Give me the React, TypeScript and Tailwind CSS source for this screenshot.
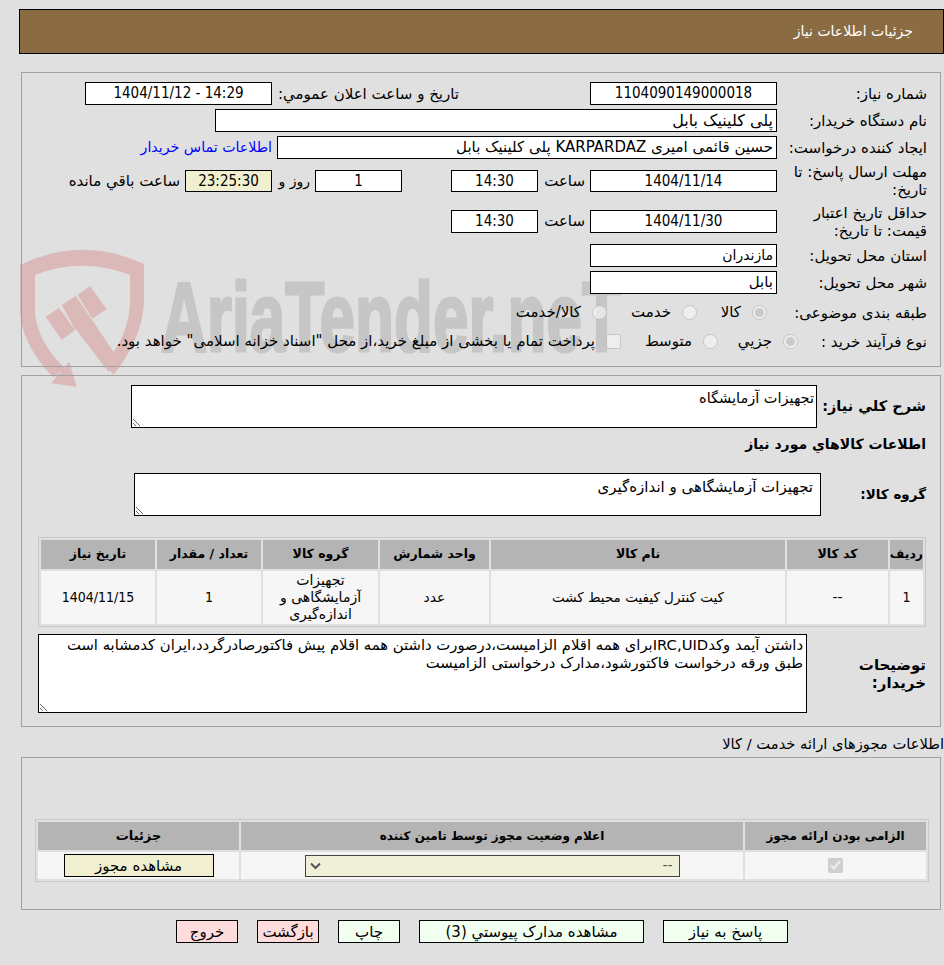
const latin = "font-['DejaVu_Sans_Condensed','Liberation_Sans',sans-serif] [font-stretch:condensed]";

const Label = ({ children, className = 'w-[150px]' }: { children: React.ReactNode; className?: string }) => (
  <div className={`shrink-0 pl-[6px] leading-[18px] ${className}`}>{children}</div>
);

const Box = ({ children, className = '', bg = 'bg-white' }: { children?: React.ReactNode; className?: string; bg?: string }) => (
  <div className={`flex h-full shrink-0 items-center border border-black px-[3px] text-black ${bg} ${className}`}>{children}</div>
);

const Radio = ({ checked = false, className = '' }: { checked?: boolean; className?: string }) => (
  <input type="radio" disabled defaultChecked={checked} className={`m-0 h-[15px] w-[15px] shrink-0 ${className}`} />
);

const Watermark = () => (
  <div className="absolute inset-0 overflow-hidden">
    <svg className="absolute left-[10px] top-[240px] h-[150px] w-[200px]" viewBox="0 0 600 450" fill="#dcb9b9">
      <path d="M30 75 Q215 -15 402 72 L402 190 Q395 300 310 405 L285 370 Q355 290 360 190 L360 105 Q215 50 75 105 L75 220 Q85 310 165 385 L130 412 Q30 310 30 200 Z" />
      <path d="M178 365 L200 440 L123 430 Z" />
      <path d="M195 265 L243 235 L330 365 L295 395 Z" />
      <path d="M155 195 L197 168 L243 235 L195 268 Z" />
      <path d="M203 165 L240 138 L290 207 L247 236 Z" />
      <path d="M107 230 L147 203 L195 270 L155 300 Z" />
    </svg>
    <svg dir="ltr" className="absolute left-[155px] top-[265px] h-[100px] w-[480px]" viewBox="0 0 480 100">
      <text x="6" y="86" direction="ltr" fontSize="98" fontWeight="700" fontFamily="Liberation Sans, sans-serif" fill="#c6c6c6" stroke="#c6c6c6" strokeWidth="3" textLength="460" lengthAdjust="spacingAndGlyphs">AriaTender.neT</text>
    </svg>
  </div>
);

const goodsColumns = [
  { title: 'ردیف', width: 'w-[33px]' },
  { title: 'کد کالا', width: 'w-[101px]' },
  { title: 'نام کالا', width: 'w-[294px]' },
  { title: 'واحد شمارش', width: 'w-[109px]' },
  { title: 'گروه کالا', width: 'w-[115px]' },
  { title: 'تعداد / مقدار', width: 'w-[104px]' },
  { title: 'تاریخ نیاز', width: 'w-[114px]' },
];

const actions = [
  { title: 'پاسخ به نیاز', width: 'w-[125px]', color: 'bg-[#f0fff0]' },
  { title: 'مشاهده مدارک پیوستي (3)', width: 'w-[225px]', color: 'bg-[#f0fff0]' },
  { title: 'چاپ', width: 'w-[62px]', color: 'bg-[#f0fff0]' },
  { title: 'بازگشت', width: 'w-[62px]', color: 'bg-[#ffdcdc]' },
  { title: 'خروج', width: 'w-[62px]', color: 'bg-[#ffdcdc]' },
];

export default function App() {
  return (
    <div dir="rtl" className="relative h-[965px] w-[944px] overflow-hidden bg-[#e0e0e0] font-['DejaVu_Sans',sans-serif] text-[15px] text-black">
      <Watermark />
      <div className="relative pt-[9px]">
        <div className="ml-[19px] flex h-[45px] items-center border border-black bg-[#8b6b42] pr-[30px] text-[14px] text-white">
          جزئیات اطلاعات نیاز
        </div>

        <div className="mt-[18px] ml-[21px] mr-[3px] h-[295px] border border-[#a0a0a0] pr-[13px] pt-[9px]">
          <div className="flex h-[23px] items-center">
            <Label>شماره نیاز:</Label>
            <Box className={`w-[187px] justify-center ${latin}`}>1104090149000018</Box>
            <div className="w-[131px] shrink-0" />
            <Label className="w-[187px] whitespace-nowrap">تاریخ و ساعت اعلان عمومي:</Label>
            <Box className={`w-[187px] justify-center ${latin}`}><span dir="ltr">1404/11/12 - 14:29</span></Box>
          </div>
          <div className="mt-[4px] flex h-[23px] items-center">
            <Label>نام دستگاه خریدار:</Label>
            <Box className="w-[562px] text-[16px]">پلی کلینیک بابل</Box>
          </div>
          <div className="mt-[4px] flex h-[23px] items-center">
            <Label>ایجاد کننده درخواست:</Label>
            <Box className="w-[500px]">حسین قائمی امیری KARPARDAZ پلی کلینیک بابل</Box>
            <a className="mr-[5px] text-[14.2px] text-[#0000ff]">اطلاعات تماس خریدار</a>
          </div>
          <div className="mt-[11px] flex h-[22px] items-center">
            <Label>مهلت ارسال پاسخ: تا تاریخ:</Label>
            <Box className={`w-[187px] justify-center ${latin}`}>1404/11/14</Box>
            <div className="w-[52px] shrink-0 pr-[5px]">ساعت</div>
            <Box className={`w-[87px] justify-center ${latin}`}>14:30</Box>
            <div className="w-[49px] shrink-0" />
            <Box className={`w-[87px] justify-center ${latin}`}>1</Box>
            <div className="w-[43px] shrink-0 pr-[5px] text-[14px]">روز و</div>
            <Box bg="bg-[#f0f0d0]" className={`w-[87px] justify-center ${latin}`}>23:25:30</Box>
            <div className="mr-[5px]">ساعت باقي مانده</div>
          </div>
          <div className="mt-[18px] flex h-[23px] items-center">
            <Label>حداقل تاریخ اعتبار قیمت: تا تاریخ:</Label>
            <Box className={`w-[187px] justify-center ${latin}`}>1404/11/30</Box>
            <div className="w-[52px] shrink-0 pr-[5px]">ساعت</div>
            <Box className={`w-[87px] justify-center ${latin}`}>14:30</Box>
          </div>
          <div className="mt-[11px] flex h-[23px] items-center">
            <Label>استان محل تحویل:</Label>
            <Box className="w-[187px] text-[14px]">مازندران</Box>
          </div>
          <div className="mt-[4px] flex h-[23px] items-center">
            <Label>شهر محل تحویل:</Label>
            <Box className="w-[187px]">بابل</Box>
          </div>
          <div className="mt-[7px] flex h-[23px] items-center">
            <Label>طبقه بندی موضوعی:</Label>
            <div className="w-[10px] shrink-0" />
            <Radio checked />
            <div className="mr-[11px] w-[44px] shrink-0">کالا</div>
            <Radio />
            <div className="mr-[11px] w-[64px] shrink-0">خدمت</div>
            <Radio />
            <div className="mr-[11px]">کالا/خدمت</div>
          </div>
          <div className="mt-[6px] flex h-[23px] items-center">
            <Label>نوع فرآیند خرید :</Label>
            <Radio checked className="mr-[-21px]" />
            <div className="mr-[11px] w-[54px] shrink-0">جزيي</div>
            <Radio />
            <div className="mr-[11px] w-[71px] shrink-0">متوسط</div>
            <input type="checkbox" disabled className="m-0 h-[15px] w-[15px] shrink-0" />
            <div className="mr-[11px] whitespace-nowrap">پرداخت تمام یا بخشی از مبلغ خرید،از محل "اسناد خزانه اسلامی" خواهد بود.</div>
          </div>
        </div>

        <div className="mt-[8px] ml-[21px] mr-[3px] h-[352px] border border-[#a0a0a0] pr-[14px] pt-[9px]">
          <div className="flex h-[43px] items-center">
            <div className="w-[109px] shrink-0 text-[14.5px] font-bold">شرح كلي نياز:</div>
            <textarea readOnly defaultValue="تجهیزات آزمایشگاه" className="h-[43px] w-[686px] shrink-0 border border-black bg-white px-[2px] text-[14.5px] leading-[24px]" />
          </div>
          <div className="mt-[5px] text-[14px] font-bold leading-[22px]">اطلاعات کالاهاي مورد نياز</div>
          <div className="mt-[18px] flex h-[43px] items-center">
            <div className="w-[105px] shrink-0 text-[13.5px] font-bold">گروه کالا:</div>
            <textarea readOnly defaultValue="تجهیزات آزمایشگاهی و اندازه‌گیری" className="h-[43px] w-[687px] shrink-0 border border-black bg-white px-[7px] py-[1px] text-[15px] leading-[24px]" />
          </div>
          <table className="mt-[21px] w-[888px] table-fixed border-separate border-spacing-[2px] border border-[#c8c8c8]">
            <thead>
              <tr>
                {goodsColumns.map((c) => (
                  <th key={c.title} className={`${c.width} h-[29px] bg-[#b4b4b4] p-0 text-[12.5px] font-bold`}>{c.title}</th>
                ))}
              </tr>
            </thead>
            <tbody>
              <tr className="text-center text-[14px] leading-[17px]">
                <td className={`h-[53px] bg-[#f6f6f6] p-0 ${latin}`}>1</td>
                <td className="h-[53px] bg-[#f6f6f6] p-0">--</td>
                <td className="h-[53px] bg-[#f6f6f6] p-0 text-[13.5px]">کیت کنترل کیفیت محیط کشت</td>
                <td className="h-[53px] bg-[#f6f6f6] p-0">عدد</td>
                <td className="h-[53px] bg-[#f6f6f6] px-[10px] py-0">تجهیزات آزمایشگاهی و اندازه‌گیری</td>
                <td className={`h-[53px] bg-[#f6f6f6] p-0 ${latin}`}>1</td>
                <td className={`h-[53px] bg-[#f6f6f6] p-0 ${latin}`}>1404/11/15</td>
              </tr>
            </tbody>
          </table>
          <div className="mt-[7px] flex h-[79px]">
            <div className="w-[119px] shrink-0 self-center text-[15px] font-bold leading-[18px]">توضیحات خریدار:</div>
            <textarea readOnly defaultValue={'داشتن آیمد وکدIRC,UIDبرای همه اقلام الزامیست،درصورت داشتن همه اقلام پیش فاکتورصادرگردد،ایران کدمشابه است\nطبق ورقه درخواست فاکتورشود،مدارک درخواستی الزامیست'} className="h-[79px] w-[769px] shrink-0 border border-black bg-white px-[3px] py-[1px] text-[14.8px] leading-[18px]" />
          </div>
        </div>

        <div className="h-[30px] pt-[7px] text-[14.7px] leading-[20px] whitespace-nowrap">اطلاعات مجوزهای ارائه خدمت / کالا</div>

        <div className="ml-[21px] mr-[3px] h-[153px] border border-[#a0a0a0] pr-[11px] pt-[61px]">
          <table className="w-[894px] table-fixed border-separate border-spacing-[2px] border border-[#c8c8c8]">
            <thead>
              <tr>
                <th className="h-[28px] w-[181px] bg-[#b4b4b4] p-0 text-[12px] font-bold">الزامی بودن ارائه مجوز</th>
                <th className="h-[28px] w-[502px] bg-[#b4b4b4] p-0 text-[12px] font-bold">اعلام وضعیت مجوز توسط تامین کننده</th>
                <th className="h-[28px] bg-[#b4b4b4] p-0 text-[13px] font-bold">جزئیات</th>
              </tr>
            </thead>
            <tbody>
              <tr>
                <td className="h-[27px] bg-[#f6f6f6] p-0 text-center">
                  <input type="checkbox" disabled defaultChecked className="m-0 h-[15px] w-[15px] align-middle" />
                </td>
                <td className="h-[27px] bg-[#f6f6f6] p-0 text-center">
                  <div className="relative mx-auto flex h-[22px] w-[375px] items-center border border-[#444444] bg-[#f0f0d8] px-[6px] text-[14px] text-[#555555]">
                    --
                    <svg className="absolute left-[4px] top-[5px] h-[10px] w-[11px]" viewBox="0 0 11 10" fill="none" stroke="#555555" strokeWidth="2">
                      <path d="M1 2.5 L5.5 7 L10 2.5" />
                    </svg>
                  </div>
                </td>
                <td className="h-[27px] bg-[#f6f6f6] p-0 text-center">
                  <button className="h-[23px] w-[150px] border border-black bg-[#f0f0d0] align-middle text-[15px]">مشاهده مجوز</button>
                </td>
              </tr>
            </tbody>
          </table>
        </div>

        <div className="mt-[10px] mr-[156px] flex gap-[19px]">
          {actions.map((a) => (
            <button key={a.title} className={`h-[23px] ${a.width} ${a.color} shrink-0 border border-black text-[15px]`}>{a.title}</button>
          ))}
        </div>
      </div>
    </div>
  );
}
